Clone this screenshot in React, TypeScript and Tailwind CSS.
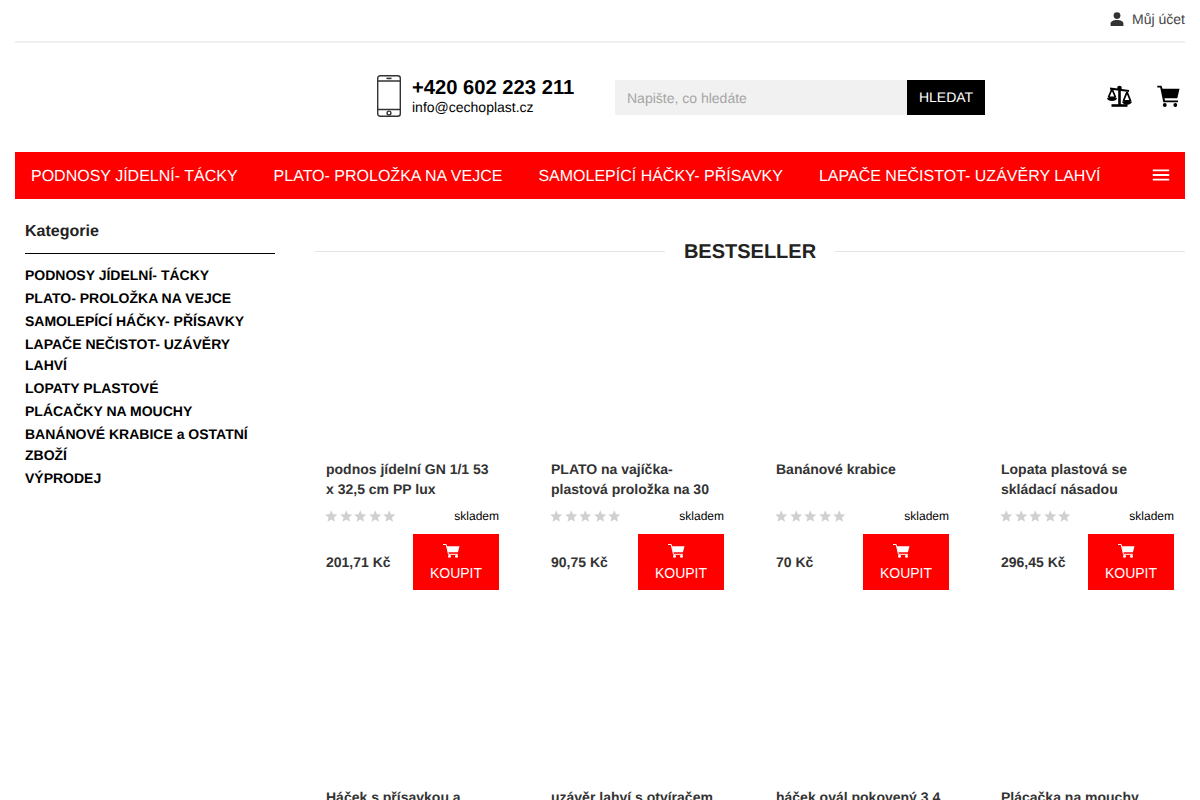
import { MdMenu, MdStar } from "react-icons/md";

const nav = ["PODNOSY JÍDELNÍ- TÁCKY", "PLATO- PROLOŽKA NA VEJCE", "SAMOLEPÍCÍ HÁČKY- PŘÍSAVKY", "LAPAČE NEČISTOT- UZÁVĚRY LAHVÍ"];
const cats = ["PODNOSY JÍDELNÍ- TÁCKY", "PLATO- PROLOŽKA NA VEJCE", "SAMOLEPÍCÍ HÁČKY- PŘÍSAVKY", "LAPAČE NEČISTOT- UZÁVĚRY LAHVÍ", "LOPATY PLASTOVÉ", "PLÁCAČKY NA MOUCHY", "BANÁNOVÉ KRABICE a OSTATNÍ ZBOŽÍ", "VÝPRODEJ"];
const products = [
  ["podnos jídelní GN 1/1 53 x 32,5 cm PP lux", "201,71 Kč"],
  ["PLATO na vajíčka- plastová proložka na 30", "90,75 Kč"],
  ["Banánové krabice", "70 Kč"],
  ["Lopata plastová se skládací násadou", "296,45 Kč"],
  ["Háček s přísavkou a", "45 Kč"],
  ["uzávěr lahví s otvíračem", "30 Kč"],
  ["háček ovál pokovený 3,4", "25 Kč"],
  ["Plácačka na mouchy", "20 Kč"],
];

function Phone() {
  return (
    <svg width="26" height="44" viewBox="0 0 26 44" fill="none" stroke="#333" strokeWidth="1.4">
      <rect x="1.7" y="1.7" width="22.6" height="40.6" rx="2.5" />
      <path d="M2 7h22M2 35.5h22" />
      <path d="M10.5 4.4h5" strokeWidth="1.6" />
      <circle cx="13" cy="39" r="1.9" />
    </svg>
  );
}

function Person() {
  return (
    <svg width="14" height="14" viewBox="0 0 14 14" fill="#333">
      <circle cx="7" cy="3.6" r="3.4" />
      <path d="M0.6 14v-2.4C0.6 9.2 3.4 7.9 7 7.9s6.4 1.3 6.4 3.7V14z" />
    </svg>
  );
}

function Scale() {
  return (
    <svg width="26" height="22" viewBox="0 0 26 22" fill="none" stroke="#000">
      <path d="M4 3.500L23 6" strokeWidth="2.200" />
      <circle cx="13.500" cy="3" r="2.300" fill="#000" stroke="none" />
      <path d="M13.500 2v18" strokeWidth="2.600" />
      <path d="M5.500 20.500h16" strokeWidth="2.600" />
      <path d="M6 4L2.400 12.500M6 4l3.600 8.500M2.400 12.500h7.200" strokeWidth="1.800" />
      <path d="M1 13h10c-.3 2-2.300 3-5 3S1.300 15 1 13z" fill="#000" stroke="none" />
      <path d="M21 7l-3.600 9M21 7l3.600 9M17.400 16h7.200" strokeWidth="1.800" />
      <path d="M16 16.500h10c-.3 2-2.300 3.200-5 3.200s-4.700-1.200-5-3.200z" fill="#000" stroke="none" />
    </svg>
  );
}

function Cart() {
  return (
    <svg width="23" height="22" viewBox="0 0 23 22" fill="#000">
      <path d="M0.300 0.800h4.200l1 3h17l-2.200 9.400H7.500l.5 2.200h13v1.800H6.300L3.200 2.600H.3z" />
      <circle cx="7.800" cy="20" r="1.900" />
      <circle cx="18.300" cy="20" r="1.900" />
    </svg>
  );
}

function SmallCart() {
  return (
    <svg width="17" height="14" viewBox="0 0 17 14" fill="#fff" className="mr-[9px]">
      <path d="M0 0.500h3.200l2.300 9.800h9.400" fill="none" stroke="#fff" strokeWidth="1" />
      <path d="M3.800 2.200H16.500l-1.600 6H5.200z" />
      <circle cx="6.500" cy="12.300" r="1.500" />
      <circle cx="13.500" cy="12.300" r="1.500" />
    </svg>
  );
}

function Card({ name, price }: { name: string; price: string }) {
  return (
    <div className="px-[11px] h-[328px] flex flex-col justify-start">
      <div className="h-[196px] shrink-0" />
      <a className="block h-[40px] text-[14px] leading-[20px] font-bold text-[#333]">{name}</a>
      <div className="flex items-center justify-between mt-[7px] h-[20px]">
        <div className="flex text-[#d0d0d0] text-[14.5px] -ml-[2px]">
          {[0, 1, 2, 3, 4].map((i) => <MdStar key={i} />)}
        </div>
        <span className="text-[12px] text-black">skladem</span>
      </div>
      <div className="flex items-center justify-between mt-[8px]">
        <span className="text-[14px] font-bold text-[#333]">{price}</span>
        <button className="w-[86px] h-[56px] bg-[#f00] text-white text-[14px] flex flex-col items-center pt-[10px]">
          <SmallCart />
          <span className="leading-[20px] mt-[5px]">KOUPIT</span>
        </button>
      </div>
    </div>
  );
}

export default function App() {
  return (
    <div className="bg-white px-[15px] font-['Liberation_Sans',Arial,sans-serif] text-[#333] [text-rendering:geometricPrecision]">
      <div className="h-[43px] border-b-2 border-[#f0f0f0] flex items-center justify-end gap-[8px] text-[14px] text-[#444] pb-[3px]">
        <Person />
        <span>Můj účet</span>
      </div>
      <div className="h-[109px] flex items-start pt-[31px]">
        <div className="ml-[361px] flex items-start gap-[10px] w-[239px]">
          <Phone />
          <div className="pt-[3px]">
            <div className="text-[20.2px] font-bold text-black leading-[23px]">+420 602 223 211</div>
            <div className="text-[14px] text-black leading-[17px] mt-[-1px]">info@cechoplast.cz</div>
          </div>
        </div>
        <div className="flex h-[35px] w-[370px] mt-[6px]">
          <div className="flex-1 bg-[#f1f1f1] text-[14px] text-[#a5a5a5] flex items-center px-[12px] pt-[1px]">Napište, co hledáte</div>
          <div className="w-[78px] bg-black text-white text-[14px] flex items-center justify-center">HLEDAT</div>
        </div>
        <div className="ml-auto flex items-center gap-[25px] mt-[11px] pr-[5px]">
          <Scale />
          <Cart />
        </div>
      </div>
      <nav className="h-[47px] bg-[#f00] flex items-center text-white text-[16px] pl-[16px]">
        <div className="flex gap-[36px] pt-[2px]">
          {nav.map((n) => <a key={n}>{n}</a>)}
        </div>
        <MdMenu className="ml-auto mr-[13px] text-[22px] -mt-[1px]" />
      </nav>
      <div className="flex">
        <aside className="w-[300px] shrink-0 pl-[10px] pr-[40px]">
          <h3 className="mt-[23px] text-[16px] leading-[20px] font-bold text-[#222] pb-[11px] border-b border-black">Kategorie</h3>
          <ul className="mt-[11px]">
            {cats.map((c) => <li key={c} className="text-[14px] leading-[21px] font-bold text-black mb-[2px]">{c}</li>)}
          </ul>
        </aside>
        <main className="flex-1">
          <div className="mt-[40px] flex items-center gap-[19px] h-[24px]">
            <div className="flex-1 border-t border-[#e5e5e5]" />
            <h2 className="text-[20px] font-bold text-[#222] pt-[2px]">BESTSELLER</h2>
            <div className="flex-1 border-t border-[#e5e5e5]" />
          </div>
          <div className="grid grid-cols-4 gap-x-[30px]">
            {products.map((p) => <Card key={p[0]} name={p[0]} price={p[1]} />)}
          </div>
        </main>
      </div>
    </div>
  );
}
